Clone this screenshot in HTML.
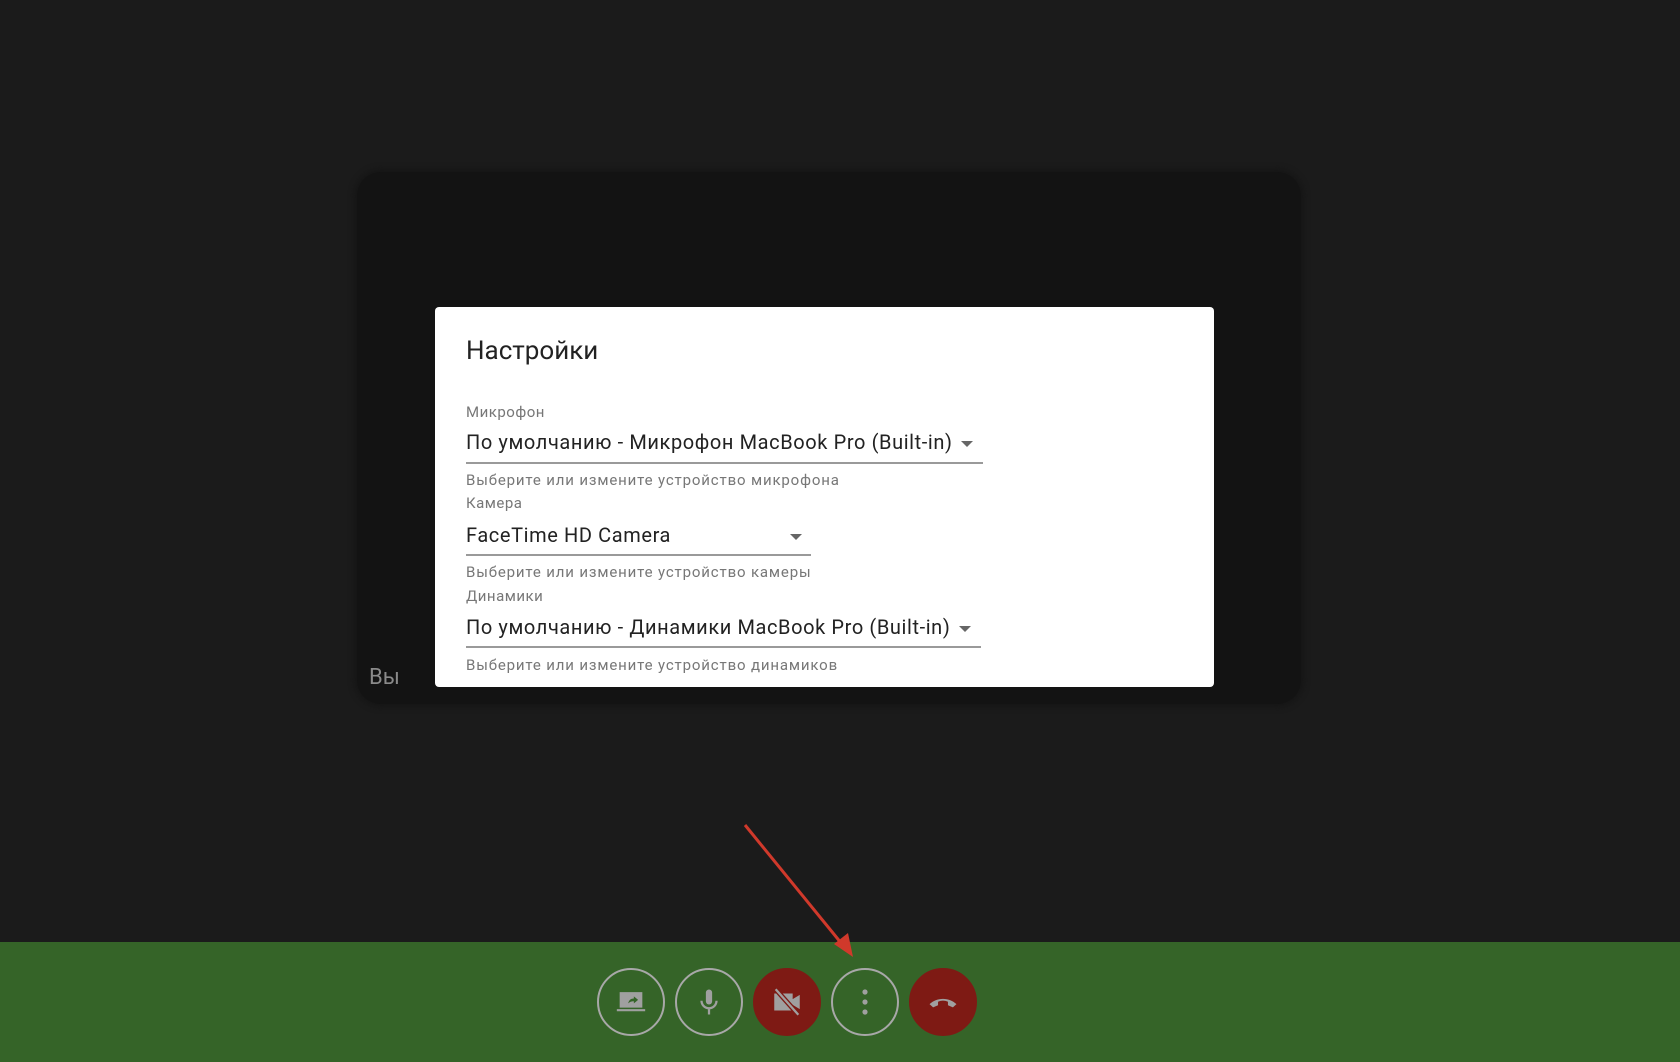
<!DOCTYPE html>
<html><head><meta charset="utf-8"><style>
*{margin:0;padding:0;box-sizing:border-box}
body{width:1680px;height:1062px;background:#1b1b1b;position:relative;overflow:hidden;font-family:"Roboto","Liberation Sans",sans-serif}
.card{position:absolute;left:357px;top:172px;width:944px;height:532px;background:#131313;border-radius:24px;box-shadow:0 0 6px 3px #161616}
.you{position:absolute;left:369px;top:665px;color:#8a8a8a;font-size:22px}
.dlg{position:absolute;left:435px;top:307px;width:779px;height:380px;background:#fff;border-radius:4px}
.t{position:absolute;left:31px;color:#222;white-space:nowrap}
.title{top:29px;font-size:26px}
.lbl{font-size:15px;color:#777;letter-spacing:.5px}
.sel{font-size:20px;color:#222;letter-spacing:.6px}
.help{font-size:15px;color:#777;letter-spacing:.85px}
.ul{position:absolute;left:31px;height:2px;background:#9a9a9a}
.arr{position:absolute;width:0;height:0;border-left:6px solid transparent;border-right:6px solid transparent;border-top:6px solid #666}
.bar{position:absolute;left:0;top:942px;width:1680px;height:120px;background:#356428}
.btn{position:absolute;top:968px;width:68px;height:68px;border-radius:50%;border:2px solid #a8a8a8;display:flex;align-items:center;justify-content:center}
.red{background:#7e1a14;border-color:#7e1a14}
</style></head><body>
<div class="card"></div>
<div class="you">Вы</div>
<div class="dlg">
<div class="t title">Настройки</div>
<div class="t lbl" style="top:96px">Микрофон</div>
<div class="t sel" style="top:123px">По умолчанию - Микрофон MacBook Pro (Built-in)</div>
<div class="arr" style="left:526px;top:134px"></div>
<div class="ul" style="top:155px;width:517px"></div>
<div class="t help" style="top:164px">Выберите или измените устройство микрофона</div>
<div class="t lbl" style="top:187px">Камера</div>
<div class="t sel" style="top:216px">FaceTime HD Camera</div>
<div class="arr" style="left:355px;top:227px"></div>
<div class="ul" style="top:247px;width:345px"></div>
<div class="t help" style="top:256px">Выберите или измените устройство камеры</div>
<div class="t lbl" style="top:280px">Динамики</div>
<div class="t sel" style="top:308px">По умолчанию - Динамики MacBook Pro (Built-in)</div>
<div class="arr" style="left:524px;top:319px"></div>
<div class="ul" style="top:339px;width:515px"></div>
<div class="t help" style="top:349px">Выберите или измените устройство динамиков</div>
</div>
<div class="bar"></div>
<div class="btn" style="left:597px"><svg width="34" height="34" viewBox="0 0 24 24"><path fill="#a0a0a0" d="M4 5h16v11H4z"/><path fill="#a0a0a0" d="M2 17h20v1.5H2z"/><path fill="#356428" d="M10 13c.5-2.5 2-3.5 4-3.5V8l3 2.5-3 2.5v-1.5c-1.7 0-3 .5-4 1.5z"/></svg></div>
<div class="btn" style="left:675px"><svg width="30" height="34" viewBox="0 0 24 24"><rect x="9.5" y="2" width="5" height="12" rx="2.5" fill="#a0a0a0"/><path d="M6 11a6 6 0 0 0 12 0M12 17v5" stroke="#a0a0a0" stroke-width="1.8" fill="none"/></svg></div>
<div class="btn red" style="left:753px"><svg width="34" height="34" viewBox="0 0 24 24"><path fill="#a0a0a0" d="M3 6h13v12H3zM16 10l5-3v10l-5-3z"/><path d="M4 3l16 18" stroke="#7e1a14" stroke-width="3.5"/><path d="M4 3l16 18" stroke="#a0a0a0" stroke-width="1.6"/></svg></div>
<div class="btn" style="left:831px"><svg width="10" height="34" viewBox="0 0 10 34"><circle cx="5" cy="7" r="2.6" fill="#a0a0a0"/><circle cx="5" cy="17" r="2.6" fill="#a0a0a0"/><circle cx="5" cy="27" r="2.6" fill="#a0a0a0"/></svg></div>
<div class="btn red" style="left:909px"><svg width="34" height="34" viewBox="0 0 24 24"><path fill="#a0a0a0" d="M2.5 13.5c5-5 14-5 19 0l-2.5 2.3-3.5-1.5v-2.5c-2.5-1-4.5-1-7 0v2.5L5 15.8z"/></svg></div>
<svg style="position:absolute;left:0;top:0" width="1680" height="1062"><line x1="745" y1="825" x2="846" y2="949" stroke="#d0392b" stroke-width="3"/><polygon points="853,957 834,944 848,933" fill="#d0392b"/></svg>
</body></html>
